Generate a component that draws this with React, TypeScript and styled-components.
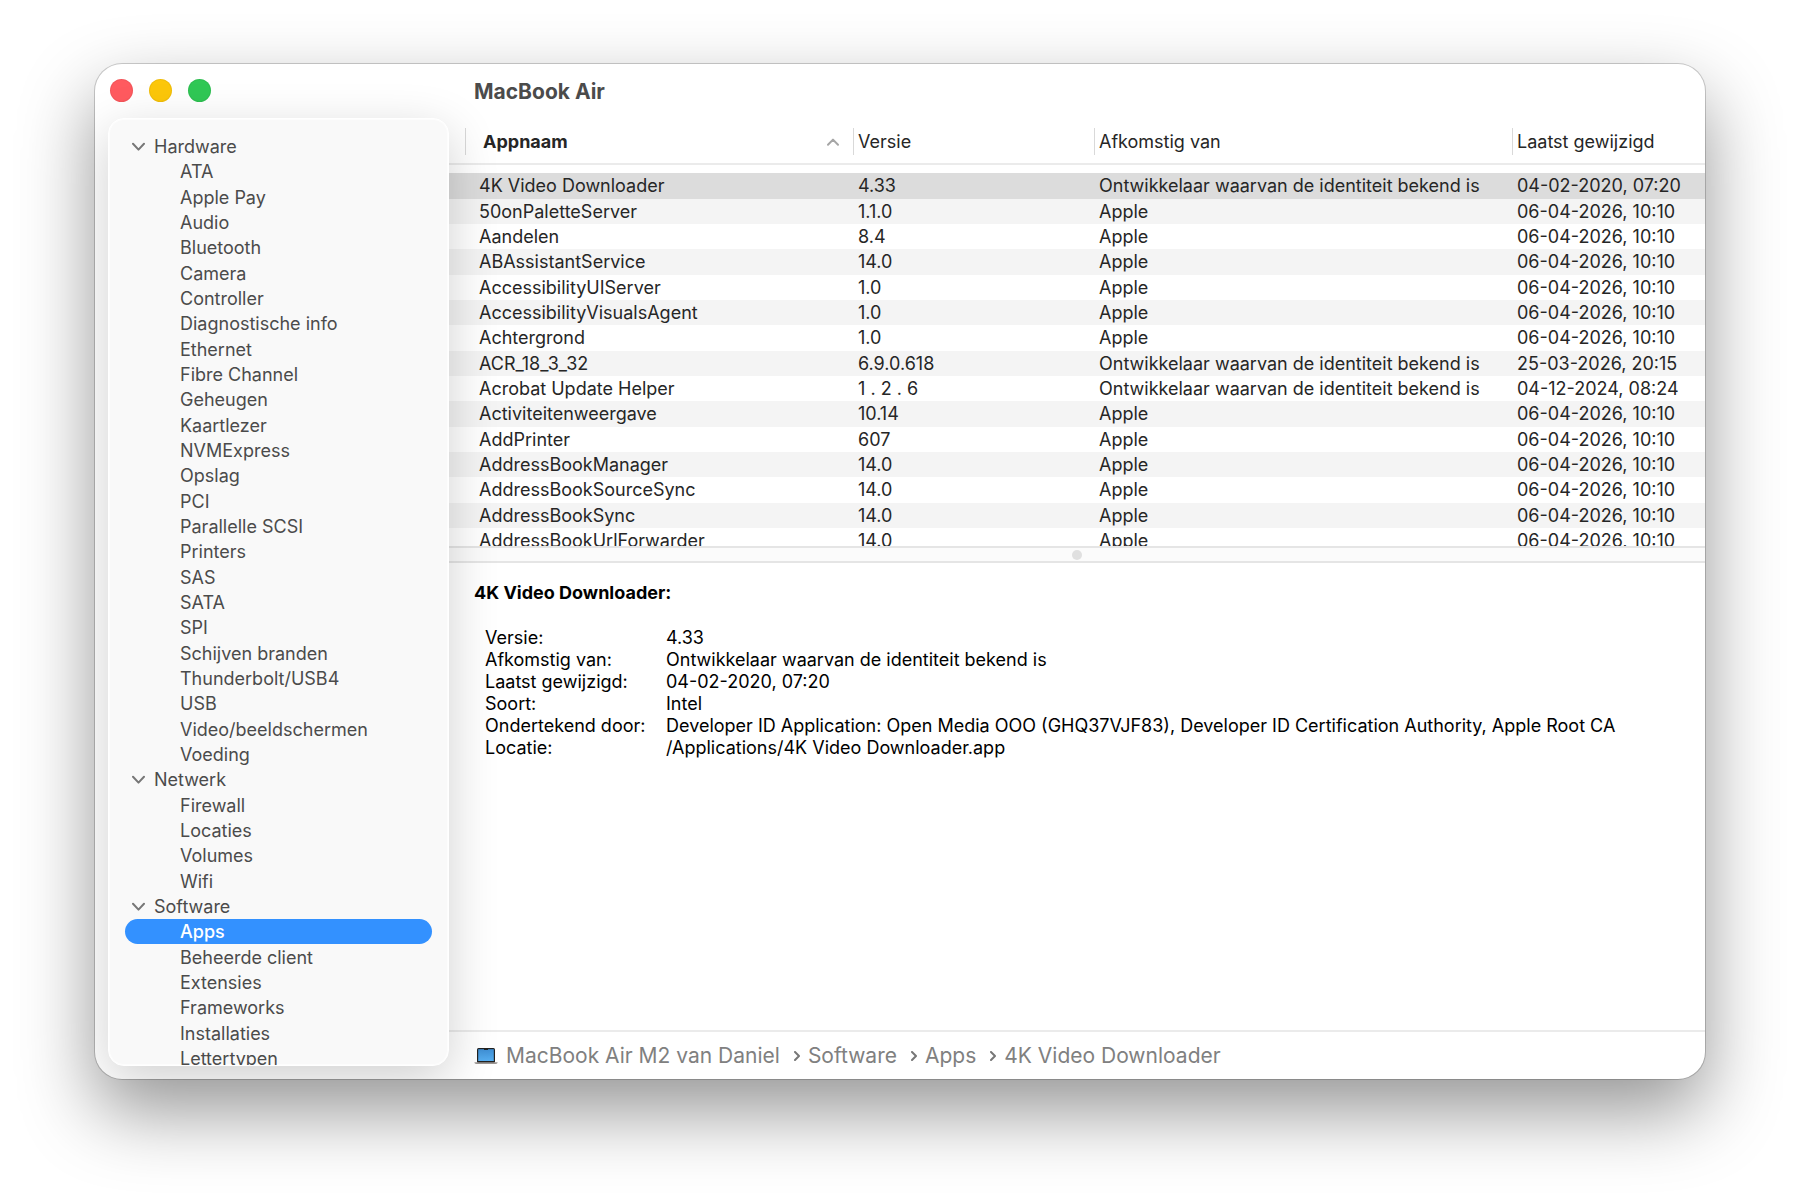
import React, { useState } from 'react';
import styled, { createGlobalStyle, css } from 'styled-components';

const GlobalStyle = createGlobalStyle`
  *, *::before, *::after { box-sizing: border-box; }
  body {
    margin: 0;
    background: #fff;
    font-family: Inter, "Liberation Sans", sans-serif;
    font-size: 18px;
    line-height: 22px;
  }
  button { font: inherit; color: inherit; background: none; border: 0; padding: 0; text-align: left; cursor: default; }
  h1, h2, ul, ol, dl, dd { margin: 0; padding: 0; }
  ul, ol { list-style: none; }
`;

const Desktop = styled.div`
  display: flex;
  height: 100vh;
  padding: 64px 95px 125px;
  overflow: hidden;
`;

const Window = styled.div`
  flex: 1;
  min-width: 0;
  display: grid;
  grid-template-columns: 354px minmax(0, 1fr);
  grid-template-rows: minmax(0, 1fr);
  background: #fff;
  border-radius: 27px;
  overflow: hidden;
  box-shadow: 0 0 0 1px rgba(0, 0, 0, 0.18), 0 32px 74px rgba(0, 0, 0, 0.42);
`;

const SideColumn = styled.div`
  position: relative;
  z-index: 1;
  display: flex;
  flex-direction: column;
  min-height: 0;
  padding: 0 0 13px 13px;
`;

const WindowControls = styled.div`
  flex: none;
  display: flex;
  gap: 16px;
  height: 54px;
  padding: 15px 2px;
`;

const Light = styled.button<{ $color: string }>`
  width: 23px;
  height: 23px;
  border-radius: 50%;
  background: ${(p) => p.$color};
  box-shadow: inset 0 0 0 1px rgba(0, 0, 0, 0.05);
`;

const Sidebar = styled.nav`
  flex: 1;
  min-height: 0;
  overflow: hidden;
  padding: 15px 16px;
  background: #f9f9f9;
  border: 1px solid #fff;
  border-radius: 16px;
  box-shadow: inset 0 0 0 1px #fdfdfd, 0 14px 50px rgba(0, 0, 0, 0.19);
`;

const Tree = styled.ul`
  display: grid;
  grid-auto-rows: 25px 26px 25px;
  color: #4b4b4b;
`;

const TreeItem = styled.button<{ $section?: boolean; $active?: boolean }>`
  display: flex;
  align-items: center;
  gap: 9px;
  width: 100%;
  height: 25px;
  padding-left: ${(p) => (p.$section ? 7 : 55)}px;
  border-radius: 13px;
  white-space: nowrap;
  ${(p) =>
    p.$active &&
    css`
      background: #3391ff;
      color: #fff;
      font-weight: 500;
    `}
`;

const Main = styled.main`
  display: flex;
  flex-direction: column;
  min-width: 0;
  min-height: 0;
`;

const Title = styled.h1`
  flex: none;
  padding: 16px 25px 24px;
  font-size: 21px;
  line-height: 24px;
  font-weight: 700;
  color: #4b4b4b;
`;

const TablePane = styled.div`
  flex: none;
  height: 418px;
  overflow: hidden;
`;

const Table = styled.table`
  width: 100%;
  table-layout: fixed;
  border-collapse: separate;
  border-spacing: 0;
  color: #262626;

  thead::after {
    content: '';
    display: block;
    height: 8px;
  }
`;

const Col = styled.col<{ $width?: number }>`
  width: ${(p) => (p.$width ? `${p.$width}px` : 'auto')};
`;

const HeadCell = styled.th`
  padding: 0 0 8px;
  border-bottom: 2px solid #ebebeb;
  font-weight: 400;

  &:first-child {
    padding-left: 16px;
  }
`;

const SortButton = styled.button<{ $sorted?: boolean }>`
  display: flex;
  align-items: center;
  justify-content: space-between;
  width: 100%;
  height: 27px;
  padding: 0 14px 0 ${(p) => (p.$sorted ? 17 : 4)}px;
  border-left: 1px solid #d9d9d9;
  font-weight: ${(p) => (p.$sorted ? 700 : 400)};
  white-space: nowrap;
`;

const Row = styled.tr<{ $selected: boolean }>`
  height: 25px;
  background: #fff;

  &:nth-child(3n + 1) { height: 26px; }
  &:nth-child(even) { background: #f4f4f4; }
  ${(p) => p.$selected && css`&&& { background: #dcdcdc; }`}
`;

const Cell = styled.td`
  padding: 0 0 0 5px;
  white-space: pre;

  &:first-child {
    padding-left: 30px;
  }
`;

const Splitter = styled.div`
  flex: none;
  display: flex;
  align-items: center;
  justify-content: center;
  height: 17px;
  background: #fbfbfb;
  border: solid #e5e5e5;
  border-width: 2px 0;
`;

const Grip = styled.span`
  width: 10px;
  height: 10px;
  border-radius: 50%;
  background: #e0e0e0;
`;

const Detail = styled.section`
  flex: 1;
  min-height: 0;
  overflow: hidden;
  padding: 19px 25px;
  color: #000;
`;

const DetailTitle = styled.h2`
  margin-bottom: 23px;
  font-size: 18px;
  line-height: 22px;
  font-weight: 700;
`;

const Facts = styled.dl`
  display: grid;
  grid-template-columns: 181px 1fr;
  padding-left: 11px;
  white-space: nowrap;
`;

const PathBar = styled.nav`
  flex: none;
  display: flex;
  align-items: center;
  height: 49px;
  padding: 0 25px;
  border-top: 2px solid #ebebeb;
  font-size: 21px;
  line-height: 26px;
  color: #808080;
`;

const Crumbs = styled.ol`
  display: flex;
  align-items: center;
  margin-left: 8px;
`;

const Crumb = styled.li`
  display: flex;
  align-items: center;
  gap: 8px;
  white-space: nowrap;

  & + & {
    margin-left: 14px;
  }
`;

const CrumbLink = styled.a`
  color: inherit;
  text-decoration: none;
`;

const ChevronDown = () => (
  <svg width="13" height="9" viewBox="0 0 13 9" fill="none" stroke="#777" strokeWidth="2" strokeLinecap="round" strokeLinejoin="round" aria-hidden="true">
    <path d="M1 1.8 6.5 7.6 12 1.8" />
  </svg>
);

const ChevronUp = () => (
  <svg width="12" height="8" viewBox="0 0 12 8" fill="none" stroke="#a6a6a6" strokeWidth="2" strokeLinecap="round" strokeLinejoin="round" aria-hidden="true">
    <path d="M1 6.8 6 1.6 11 6.8" />
  </svg>
);

const ChevronRight = () => (
  <svg width="6" height="10" viewBox="0 0 6 10" fill="none" stroke="#777" strokeWidth="2" strokeLinecap="round" strokeLinejoin="round" aria-hidden="true">
    <path d="M1 1 5 5 1 9" />
  </svg>
);

const LaptopIcon = () => (
  <svg width="24" height="18" viewBox="0 0 24 18" aria-hidden="true">
    <defs>
      <linearGradient id="screen" x1="0" y1="0" x2="0" y2="1">
        <stop offset="0" stopColor="#3f8fd4" />
        <stop offset="1" stopColor="#56aef0" />
      </linearGradient>
    </defs>
    <rect x="3" y="1" width="18" height="15" rx="1.5" fill="#222" />
    <rect x="4.2" y="2.2" width="15.6" height="11.8" fill="url(#screen)" />
    <rect x="10" y="1.6" width="4" height="1.5" rx="0.5" fill="#222" />
    <path d="M0.5 15.2h23v0.8q-0.6 1-2 1h-19q-1.4 0-2-1z" fill="#9b9693" />
  </svg>
);

const tree = [
  { name: 'Hardware', items: ['ATA', 'Apple Pay', 'Audio', 'Bluetooth', 'Camera', 'Controller', 'Diagnostische info', 'Ethernet', 'Fibre Channel', 'Geheugen', 'Kaartlezer', 'NVMExpress', 'Opslag', 'PCI', 'Parallelle SCSI', 'Printers', 'SAS', 'SATA', 'SPI', 'Schijven branden', 'Thunderbolt/USB4', 'USB', 'Video/beeldschermen', 'Voeding'] },
  { name: 'Netwerk', items: ['Firewall', 'Locaties', 'Volumes', 'Wifi'] },
  { name: 'Software', items: ['Apps', 'Beheerde client', 'Extensies', 'Frameworks', 'Installaties', 'Lettertypen'] },
];

const known = 'Ontwikkelaar waarvan de identiteit bekend is';
const built = '06-04-2026, 10:10';

const apps = [
  ['4K Video Downloader', '4.33', known, '04-02-2020, 07:20'],
  ['50onPaletteServer', '1.1.0', 'Apple', built],
  ['Aandelen', '8.4', 'Apple', built],
  ['ABAssistantService', '14.0', 'Apple', built],
  ['AccessibilityUIServer', '1.0', 'Apple', built],
  ['AccessibilityVisualsAgent', '1.0', 'Apple', built],
  ['Achtergrond', '1.0', 'Apple', built],
  ['ACR_18_3_32', '6.9.0.618', known, '25-03-2026, 20:15'],
  ['Acrobat Update Helper', '1 . 2 . 6', known, '04-12-2024, 08:24'],
  ['Activiteitenweergave', '10.14', 'Apple', built],
  ['AddPrinter', '607', 'Apple', built],
  ['AddressBookManager', '14.0', 'Apple', built],
  ['AddressBookSourceSync', '14.0', 'Apple', built],
  ['AddressBookSync', '14.0', 'Apple', built],
  ['AddressBookUrlForwarder', '14.0', 'Apple', built],
];

const facts = [
  ['Versie:', '4.33'],
  ['Afkomstig van:', known],
  ['Laatst gewijzigd:', '04-02-2020, 07:20'],
  ['Soort:', 'Intel'],
  ['Ondertekend door:', 'Developer ID Application: Open Media OOO (GHQ37VJF83), Developer ID Certification Authority, Apple Root CA'],
  ['Locatie:', '/Applications/4K Video Downloader.app'],
];

const path = ['MacBook Air M2 van Daniel', 'Software', 'Apps', '4K Video Downloader'];

export default function App() {
  const [section, setSection] = useState('Apps');
  const [selected, setSelected] = useState(0);

  return (
    <>
      <GlobalStyle />
      <Desktop>
        <Window>
          <SideColumn>
            <WindowControls>
              <Light $color="#ff5a5f" aria-label="Sluit" />
              <Light $color="#fcc70a" aria-label="Minimaliseer" />
              <Light $color="#30c855" aria-label="Vergroot" />
            </WindowControls>
            <Sidebar aria-label="Onderdelen">
              <Tree>
                {tree.map((group) => (
                  <React.Fragment key={group.name}>
                    <li>
                      <TreeItem $section aria-expanded="true">
                        <ChevronDown />
                        {group.name}
                      </TreeItem>
                    </li>
                    {group.items.map((item) => (
                      <li key={item}>
                        <TreeItem $active={item === section} onClick={() => setSection(item)}>
                          {item}
                        </TreeItem>
                      </li>
                    ))}
                  </React.Fragment>
                ))}
              </Tree>
            </Sidebar>
          </SideColumn>
          <Main>
            <Title>MacBook Air</Title>
            <TablePane>
              <Table>
                <colgroup>
                  <Col />
                  <Col $width={241} />
                  <Col $width={418} />
                  <Col $width={193} />
                </colgroup>
                <thead>
                  <tr>
                    <HeadCell scope="col" aria-sort="ascending">
                      <SortButton $sorted>
                        Appnaam
                        <ChevronUp />
                      </SortButton>
                    </HeadCell>
                    <HeadCell scope="col"><SortButton>Versie</SortButton></HeadCell>
                    <HeadCell scope="col"><SortButton>Afkomstig van</SortButton></HeadCell>
                    <HeadCell scope="col"><SortButton>Laatst gewijzigd</SortButton></HeadCell>
                  </tr>
                </thead>
                <tbody>
                  {apps.map((app, index) => (
                    <Row key={app[0]} $selected={index === selected} aria-selected={index === selected} onClick={() => setSelected(index)}>
                      {app.map((value, column) => (
                        <Cell key={column}>{value}</Cell>
                      ))}
                    </Row>
                  ))}
                </tbody>
              </Table>
            </TablePane>
            <Splitter role="separator" aria-orientation="horizontal">
              <Grip />
            </Splitter>
            <Detail>
              <DetailTitle>4K Video Downloader:</DetailTitle>
              <Facts>
                {facts.map(([label, value]) => (
                  <React.Fragment key={label}>
                    <dt>{label}</dt>
                    <dd>{value}</dd>
                  </React.Fragment>
                ))}
              </Facts>
            </Detail>
            <PathBar aria-label="Pad">
              <LaptopIcon />
              <Crumbs>
                {path.map((name, index) => (
                  <Crumb key={name}>
                    {index > 0 && <ChevronRight />}
                    <CrumbLink href="#">{name}</CrumbLink>
                  </Crumb>
                ))}
              </Crumbs>
            </PathBar>
          </Main>
        </Window>
      </Desktop>
    </>
  );
}
